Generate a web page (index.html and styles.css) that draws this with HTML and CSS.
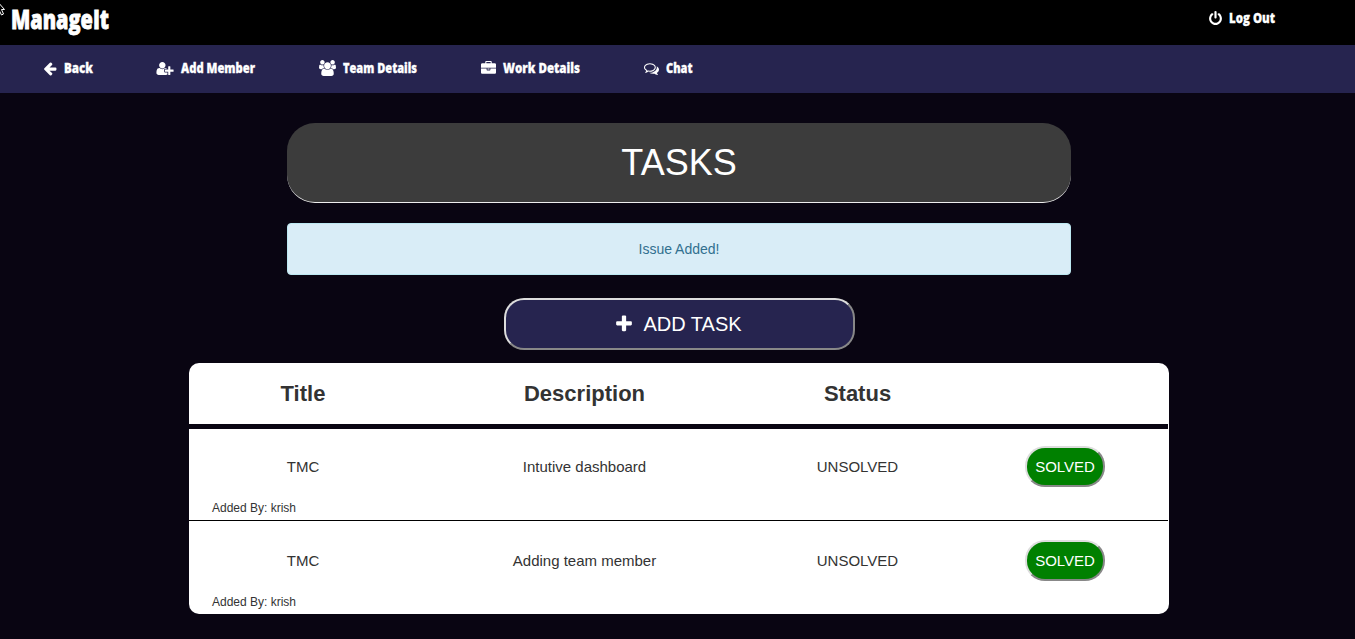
FILE: index.html
```
<!DOCTYPE html>
<html lang="en">
<head>
<meta charset="utf-8">
<title>ManageIt</title>
<link rel="stylesheet" href="styles.css">
</head>
<body>
<header class="topbar">
  <svg class="pointer" width="6" height="16" viewBox="0 0 6 16"><path d="M-3 0L4.5 8.5H1.5L3.5 13L1.5 14L-.5 10" fill="#000" stroke="#fff"/></svg>
  <svg class="brand" width="102" height="40"><text x="0" y="29" textLength="98" lengthAdjust="spacingAndGlyphs">ManageIt</text></svg>
  <a class="logout">
    <svg class="icon" width="13" height="15" viewBox="128 0 1536 1792"><path d="M1664 896q0 156-61 298t-164 245-245 164-298 61-298-61-245-164-164-245-61-298q0-182 80.5-343t226.5-270q43-32 95.5-25t83.5 50q32 42 24.5 94.5t-49.5 84.5q-98 74-151.5 181t-53.5 228q0 104 40.5 198.5t109.5 163.5 163.5 109.5 198.5 40.5 198.5-40.5 163.5-109.5 109.5-163.5 40.5-198.5q0-121-53.5-228t-151.5-181q-42-32-49.5-84.5t24.5-94.5q31-43 84-50t95 25q146 109 226.5 270t80.5 343zm-640-768v640q0 52-38 90t-90 38-90-38-38-90v-640q0-52 38-90t90-38 90 38 38 90z"/></svg>
    <svg class="label" width="47" height="22"><text x="0" y="16" textLength="46" lengthAdjust="spacingAndGlyphs">Log Out</text></svg>
  </a>
</header>
<nav class="nav">
  <a class="link">
    <svg class="icon" width="14" height="15" viewBox="64 0 1664 1792"><path d="M1664 896v128q0 53-32.5 90.5t-84.5 37.5h-704l293 294q38 36 38 90t-38 90l-75 76q-37 37-90 37-52 0-91-37l-651-652q-37-37-37-90 0-52 37-91l651-650q38-38 91-38 52 0 90 38l75 74q38 38 38 91t-38 91l-293 293h704q52 0 84.5 37.5t32.5 90.5z"/></svg>
    <svg class="label" width="29" height="22"><text x="0" y="16" textLength="29" lengthAdjust="spacingAndGlyphs">Back</text></svg>
  </a>
  <a class="link">
    <svg class="icon" width="18" height="15" viewBox="0 0 2048 1792"><path d="M704 896q-159 0-271.5-112.5t-112.5-271.5 112.5-271.5 271.5-112.5 271.5 112.5 112.5 271.5-112.5 271.5-271.5 112.5zm960 128h352q13 0 22.5 9.5t9.5 22.5v192q0 13-9.5 22.5t-22.5 9.5h-352v352q0 13-9.5 22.5t-22.5 9.5h-192q-13 0-22.5-9.5t-9.5-22.5v-352h-352q-13 0-22.5-9.5t-9.5-22.5v-192q0-13 9.5-22.5t22.5-9.5h352v-352q0-13 9.5-22.5t22.5-9.5h192q13 0 22.5 9.5t9.5 22.5v352zm-736 224q0 52 38 90t90 38h256v238q-68 50-171 50h-874q-121 0-194-69t-73-190q0-53 3.5-103.5t14-109 26.5-108.5 43-97.5 62-81 85.5-53.5 111.5-20q19 0 39 17 79 61 154.5 91.5t164.5 30.5 164.5-30.5 154.5-91.5q20-17 39-17 132 0 217 96h-223q-52 0-90 38t-38 90v192z"/></svg>
    <svg class="label" width="75" height="22"><text x="0" y="16" textLength="74" lengthAdjust="spacingAndGlyphs">Add Member</text></svg>
  </a>
  <a class="link">
    <svg class="icon" width="17" height="16" viewBox="-64 0 1920 1792"><path d="M529 896q-162 5-265 128h-134q-82 0-138-40.5t-56-118.5q0-353 124-353 6 0 43.5 21t97.5 42.5 119 21.5q67 0 133-23-5 37-5 66 0 139 81 256zm1071 637q0 120-73 189.5t-194 69.5h-874q-121 0-194-69.5t-73-189.5q0-53 3.5-103.5t14-109 26.5-108.5 43-97.5 62-81 85.5-53.5 111.5-20q10 0 43 21.5t73 48 107 48 135 21.5 135-21.5 107-48 73-48 43-21.5q61 0 111.5 20t85.5 53.5 62 81 43 97.5 26.5 108.5 14 109 3.5 103.5zm-1024-1277q0 106-75 181t-181 75-181-75-75-181 75-181 181-75 181 75 75 181zm704 384q0 159-112.5 271.5t-271.5 112.5-271.5-112.5-112.5-271.5 112.5-271.5 271.5-112.5 271.5 112.5 112.5 271.5zm576 225q0 78-56 118.5t-138 40.5h-134q-103-123-265-128 81-117 81-256 0-29-5-66 66 23 133 23 59 0 119-21.5t97.5-42.5 43.5-21q124 0 124 353zm-128-609q0 106-75 181t-181 75-181-75-75-181 75-181 181-75 181 75 75 181z"/></svg>
    <svg class="label" width="75" height="22"><text x="0" y="16" textLength="74" lengthAdjust="spacingAndGlyphs">Team Details</text></svg>
  </a>
  <a class="link">
    <svg class="icon" width="15" height="15" viewBox="0 0 1792 1792"><path d="M640 256h512v-128h-512v128zm1152 640v480q0 66-47 113t-113 47h-1472q-66 0-113-47t-47-113v-480h672v160q0 26 19 45t45 19h320q26 0 45-19t19-45v-160h672zm-768 0v128h-256v-128h256zm768-480v384h-1792v-384q0-66 47-113t113-47h352v-160q0-40 28-68t68-28h576q40 0 68 28t28 68v160h352q66 0 113 47t47 113z"/></svg>
    <svg class="label" width="78" height="22"><text x="0" y="16" textLength="77" lengthAdjust="spacingAndGlyphs">Work Details</text></svg>
  </a>
  <a class="link">
    <svg class="icon" width="15" height="15" viewBox="0 0 1792 1792"><path d="M704 384q-153 0-286 52t-211.5 141-78.5 191q0 82 53 158t149 132l97 56-35 84q34-20 62-39l44-31 53 10q78 14 153 14 153 0 286-52t211.5-141 78.5-191-78.5-191-211.5-141-286-52zm0-128q191 0 353.5 68.5t256.5 186.5 94 257-94 257-256.5 186.5-353.5 68.5q-86 0-176-16-124 88-278 128-36 9-86 16h-3q-11 0-20.5-8t-11.5-21q-1-3-1-6.5t.5-6.5 2-6l2.5-5 3.5-5.5 4-5 4.5-5 4-4.5q5-6 23-25t26-29.5 22.5-29 25-38.5 20.5-44q-124-72-195-177t-71-224q0-139 94-257t256.5-186.5 353.5-68.5zm822 1169q10 24 20.5 44t25 38.5 22.5 29 26 29.5 23 25q1 1 4 4.5t4.5 5 4 5 3.5 5.5l2.5 5 2 6 .5 6.5-1 6.5q-3 14-13 22t-22 7q-50-7-86-16-154-40-278-128-90 16-176 16-271 0-472-132 58 4 88 4 161 0 309-45t264-129q125-92 192-212t67-254q0-77-23-152 129 71 204 178t75 230q0 120-71 224.5t-195 176.5z"/></svg>
    <svg class="label" width="27" height="22"><text x="0" y="16" textLength="26.500" lengthAdjust="spacingAndGlyphs">Chat</text></svg>
  </a>
</nav>
<main class="page">
  <h1 class="title">TASKS</h1>
  <div class="alert">Issue Added!</div>
  <button class="add">
    <svg class="icon" width="20" height="20" viewBox="0 0 1792 1792"><path d="M1600 736v192q0 40-28 68t-68 28h-416v416q0 40-28 68t-68 28h-192q-40 0-68-28t-28-68v-416h-416q-40 0-68-28t-28-68v-192q0-40 28-68t68-28h416v-416q0-40 28-68t68-28h192q40 0 68 28t28 68v416h416q40 0 68 28t28 68z"/></svg>
    <span>ADD TASK</span>
  </button>
  <section class="tasks">
    <div class="row head"><span>Title</span><span>Description</span><span>Status</span><span></span></div>
    <div class="task">
      <div class="row"><span>TMC</span><span>Intutive dashboard</span><span>UNSOLVED</span><button class="solved">SOLVED</button></div>
      <p class="by">Added By: krish</p>
    </div>
    <div class="task">
      <div class="row"><span>TMC</span><span>Adding team member</span><span>UNSOLVED</span><button class="solved">SOLVED</button></div>
      <p class="by">Added By: krish</p>
    </div>
  </section>
</main>
</body>
</html>
```
FILE: styles.css
```
* { box-sizing: border-box; }
body {
  margin: 0;
  height: 639px;
  overflow: hidden;
  background: #090512;
  color: #333;
  font: 15px/20px "Liberation Sans", Arial, sans-serif;
}
svg { display: block; flex: none; }
.topbar {
  position: relative;
  display: flex;
  justify-content: space-between;
  height: 45px;
  padding: 0 79px 0 11px;
  background: #000;
}
.pointer { position: absolute; left: 0; top: 1px; }
.brand, .label {
  overflow: visible;
  fill: #fff;
  stroke: #fff;
  font-family: "Open Sans", "Noto Sans", sans-serif;
  font-weight: 800;
}
.brand { font-size: 27px; stroke-width: .8px; }
.label { font-size: 14px; stroke-width: .3px; }
.icon { fill: #fff; }
.logout, .link { display: flex; align-items: center; }
.logout { height: 36px; gap: 7px; }
.nav {
  display: flex;
  gap: 63.5px;
  height: 48px;
  padding: 0 43px 2px;
  background: #26244f;
}
.link { gap: 6.5px; }
.page { display: flex; flex-direction: column; align-items: center; padding: 30px 0 0 3px; }
.title {
  width: 784px;
  height: 80px;
  margin: 0 0 20px;
  border-bottom: 1px solid #eee;
  border-radius: 28px;
  background: #3c3c3c;
  color: #fff;
  font-size: 36px;
  font-weight: 400;
  line-height: 79px;
  text-align: center;
}
.alert {
  width: 784px;
  height: 52px;
  border: 1px solid #bce8f1;
  border-radius: 4px;
  background: #d9edf7;
  color: #31708f;
  font-size: 14px;
  line-height: 50px;
  text-align: center;
}
.add {
  display: flex;
  align-items: center;
  justify-content: center;
  gap: 9px;
  width: 351px;
  height: 52px;
  margin: 23px 0 13px;
  padding: 0 8px 0 6px;
  border: 2px solid;
  border-color: #ddd #888 #888 #ddd;
  border-radius: 20px;
  background: #26244f;
  color: #fff;
  font: 20px "Liberation Sans", Arial, sans-serif;
}
.tasks {
  width: 980px;
  height: 251px;
  overflow: hidden;
  border-radius: 10px;
  background: #fff;
}
.row {
  display: grid;
  grid-template-columns: 228px 335px 211px 204px;
  align-items: center;
  justify-items: center;
  height: 76px;
}
.head {
  width: 979px;
  height: 66px;
  border-bottom: 5px solid #090512;
  font-size: 22px;
  font-weight: 700;
}
.task { width: 979px; height: 94px; }
.task:nth-child(2) { height: 92px; border-bottom: 1px solid #000; }
.task:nth-child(3) .row { height: 80px; }
.by { margin: -7px 0 0 23px; font-size: 12px; }
.task:nth-child(3) .by { margin-top: -9px; }
.solved {
  width: 80px;
  height: 41px;
  margin-bottom: 1px;
  padding: 0;
  border: 2px solid;
  border-color: #ddd #888 #888 #ddd;
  border-radius: 20px;
  background: #008000;
  color: #fff;
  font: 15px "Liberation Sans", Arial, sans-serif;
}
```
